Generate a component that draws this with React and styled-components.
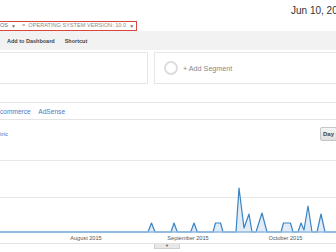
import React from 'react';
import styled, { createGlobalStyle } from 'styled-components';

const GlobalStyle = createGlobalStyle`
  html, body {
    margin: 0;
    padding: 0;
    background: #ffffff;
  }
  body {
    font-family: "Liberation Sans", Arial, sans-serif;
    overflow: hidden;
  }
`;

const Page = styled.div`
  width: 336px;
  height: 252px;
  overflow: hidden;
  display: flex;
  flex-direction: column;
  background: #ffffff;
`;

const DateRow = styled.div`
  height: 21px;
  display: flex;
  align-items: center;
  padding-left: 291px;
  white-space: nowrap;
  font-size: 10px;
  color: #333333;
`;

const FilterRow = styled.div`
  height: 10px;
  display: flex;
`;

const FilterBox = styled.div`
  box-sizing: border-box;
  margin-left: -3px;
  width: 140px;
  height: 10px;
  border: 1px solid #d9463f;
  display: flex;
  align-items: center;
  gap: 3px;
  padding-left: 2px;
  font-size: 5.6px;
  line-height: 1;
  color: #8a8a8a;
  white-space: nowrap;
`;

const Dimension = styled.span`
  color: ${(p) => (p.primary ? '#5d7095' : '#8a8a8a')};
`;

const Caret = styled.span`
  font-size: 5px;
  color: #777777;
  margin-right: ${(p) => p.gap || 0}px;
`;

const Toolbar = styled.div`
  height: 19px;
  background: #f2f2f2;
  display: flex;
  align-items: center;
  gap: 10px;
  padding-left: 7px;
  font-size: 5.5px;
  font-weight: bold;
  color: #444444;
  margin-bottom: 2px;
`;

const SegmentRow = styled.div`
  height: 32px;
  display: flex;
  gap: 6px;
  margin-left: -2px;
  margin-right: -10px;
`;

const SegmentBox = styled.div`
  box-sizing: border-box;
  flex: ${(p) => (p.grow ? '1' : '0 0 150px')};
  border: 1px solid #e6e6e6;
  display: flex;
  align-items: center;
  gap: 5px;
  padding-left: 9px;
`;

const Ring = styled.div`
  box-sizing: border-box;
  width: 14px;
  height: 14px;
  border-radius: 50%;
  border: 2px solid #dddddd;
`;

const AddSegment = styled.span`
  font-size: 7.2px;
  color: #888888;
`;

const Tabs = styled.div`
  box-sizing: border-box;
  margin-top: 18px;
  height: 18px;
  border-top: 1px solid #e4e4e4;
  border-bottom: 1px solid #e4e4e4;
  display: flex;
  align-items: center;
  gap: 7.5px;
  margin-left: -4.4px;
  font-size: 6.6px;
  color: #4a7bbf;
  white-space: nowrap;
`;

const MetricRow = styled.div`
  height: 14px;
  margin-top: 7px;
  margin-bottom: 9px;
  display: flex;
  align-items: center;
`;

const MetricPicker = styled.div`
  width: 8px;
  display: flex;
  justify-content: flex-end;
  white-space: nowrap;
  font-size: 6px;
  color: #4a7bbf;
`;

const DayButton = styled.div`
  box-sizing: border-box;
  margin-left: auto;
  margin-right: -1px;
  width: 17px;
  height: 14px;
  border: 1px solid #c6c6c6;
  border-radius: 2px;
  background: linear-gradient(#f5f5f5, #e0e0e0);
  display: flex;
  align-items: center;
  justify-content: center;
  font-size: 6px;
  font-weight: bold;
  color: #444444;
`;

const Chart = styled.svg`
  display: block;
  width: 336px;
  height: 93px;
`;

const ScrollTrack = styled.div`
  border-top: 1px solid #e2e2e2;
  display: flex;
  padding-left: 154px;
`;

const ScrollHandle = styled.div`
  box-sizing: border-box;
  width: 26px;
  height: 5px;
  background: #e8e8e8;
  border: 1px solid #d0d0d0;
  border-top: none;
  display: flex;
  justify-content: center;
  align-items: center;
  font-size: 4px;
  line-height: 1;
  color: #555555;
`;

const points = [
  [0, 82], [148, 82], [151.5, 73], [155, 82],
  [171, 82], [174, 73], [177.3, 82],
  [190.7, 82], [194, 73], [197.3, 82],
  [213, 82], [215.5, 73], [220.5, 73], [223, 82],
  [236, 82], [239, 38], [244, 78], [249, 64], [252, 82],
  [256, 82], [262, 63], [267, 82],
  [281, 82], [283.5, 73], [290.5, 73], [293, 82],
  [298, 82], [301, 73], [304, 80], [308, 56], [312, 82],
  [317, 82], [321, 64], [325, 82],
  [336, 82],
];

const linePath = points.map(([x, y], i) => `${i ? 'L' : 'M'}${x} ${y}`).join(' ');
const areaPath = `${linePath} L336 82 L0 82 Z`;

const axisLabels = [
  { x: 86, text: 'August 2015' },
  { x: 188, text: 'September 2015' },
  { x: 285.5, text: 'October 2015' },
];

const App = () => (
  <Page>
    <GlobalStyle />
    <DateRow>Jun 10, 2015 - Oct 31, 2015</DateRow>
    <FilterRow>
      <FilterBox>
        <Dimension primary>OS</Dimension>
        <Caret gap={3}>▼</Caret>
        <span>=</span>
        <Dimension>OPERATING SYSTEM VERSION: 10.0</Dimension>
        <Caret>▼</Caret>
      </FilterBox>
    </FilterRow>
    <Toolbar>
      <span>Add to Dashboard</span>
      <span>Shortcut</span>
    </Toolbar>
    <SegmentRow>
      <SegmentBox />
      <SegmentBox grow>
        <Ring />
        <AddSegment>+ Add Segment</AddSegment>
      </SegmentBox>
    </SegmentRow>
    <Tabs>
      <span>Ecommerce</span>
      <span>AdSense</span>
    </Tabs>
    <MetricRow>
      <MetricPicker>Select a metric</MetricPicker>
      <DayButton>Day</DayButton>
    </MetricRow>
    <Chart viewBox="0 0 336 93">
      <line x1="0" y1="10.5" x2="336" y2="10.5" stroke="#e8e8e8" strokeWidth="1" />
      <line x1="0" y1="47.5" x2="336" y2="47.5" stroke="#e8e8e8" strokeWidth="1" />
      <path d={areaPath} fill="#e1ecf7" />
      <path d={linePath} fill="none" stroke="#3a84c3" strokeWidth="1.2" strokeLinejoin="round" />
      <line x1="0" y1="82" x2="336" y2="82" stroke="#8fb9e0" strokeWidth="1.6" />
      {axisLabels.map((l) => (
        <text
          key={l.text}
          x={l.x}
          y="90"
          textAnchor="middle"
          fontSize="5.6"
          fill="#555555"
          fontFamily='"Liberation Sans", Arial, sans-serif'
        >
          {l.text}
        </text>
      ))}
    </Chart>
    <ScrollTrack>
      <ScrollHandle>▼</ScrollHandle>
    </ScrollTrack>
  </Page>
);

export default App;
